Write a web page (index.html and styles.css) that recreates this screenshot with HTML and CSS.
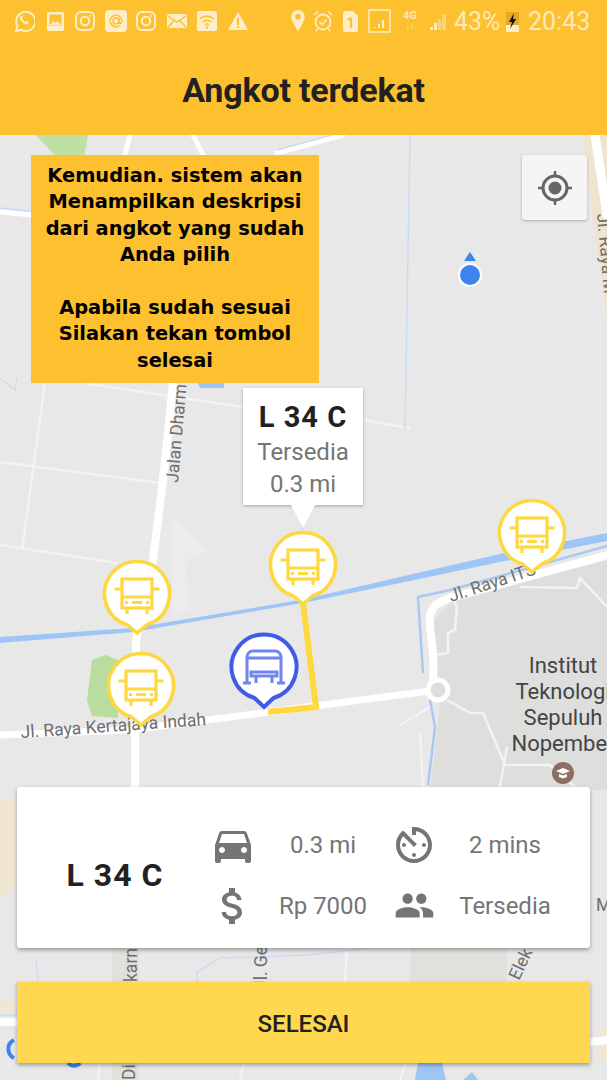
FILE: index.html
```html
<!DOCTYPE html>
<html lang="id">
<head>
<meta charset="UTF-8">
<title>Angkot terdekat</title>
<link rel="stylesheet" href="styles.css">
</head>
<body>
<div class="screen">
  <header class="topbar">
    <div class="status">
      <div class="status-left">
        <svg class="si" viewBox="0 0 22 24"><path d="M3 22l1.400-5A9.600 9.600 0 1 1 8 20.700z" fill="none" stroke="#fdeec8" stroke-width="2"/><path d="M7.500 7c1-1 2-.5 2.300 1l-.6 1.500c.8 1.600 1.800 2.600 3.300 3.300l1.500-.8c1.500.3 2 1.300 1.200 2.400-1.500 1.500-3.500 1-6-1.200C7 10.800 6.200 8.700 7.500 7z" fill="#fdeec8"/></svg>
        <svg class="si" viewBox="0 0 22 24"><rect x="3" y="3" width="17" height="19" rx="1.500" fill="#fdeec8"/><rect x="5.500" y="5.500" width="12" height="11" fill="#fdc02f"/><path d="M6 16l3.500-4 2 2 2-2 3.500 4z" fill="#fdeec8"/></svg>
        <svg class="si" viewBox="0 0 22 24"><rect x="2" y="3" width="18" height="18" rx="5" fill="none" stroke="#fdeec8" stroke-width="2"/><circle cx="11" cy="12" r="4.200" fill="none" stroke="#fdeec8" stroke-width="2"/><circle cx="16" cy="7" r="1" fill="#fdeec8"/></svg>
        <svg class="si" viewBox="0 0 22 24"><rect x="0" y="1" width="22" height="22" rx="4" fill="#fdeec8"/><circle cx="11" cy="12" r="3" fill="none" stroke="#fdc02f" stroke-width="1.500"/><path d="M14 9v4.500c0 1.500 2.800 1.500 2.800-1.500a5.800 5.800 0 1 0-2.300 4.600" fill="none" stroke="#fdc02f" stroke-width="1.500"/></svg>
        <svg class="si" viewBox="0 0 22 24"><rect x="2" y="3" width="18" height="18" rx="5" fill="none" stroke="#fdeec8" stroke-width="2"/><circle cx="11" cy="12" r="4.200" fill="none" stroke="#fdeec8" stroke-width="2"/><circle cx="16" cy="7" r="1" fill="#fdeec8"/></svg>
        <svg class="si" viewBox="0 0 22 24"><rect x="1" y="5" width="20" height="14" rx="2" fill="#fdeec8"/><path d="M2 7l9 6 9-6M2 18l6-6M20 18l-6-6" fill="none" stroke="#fdc02f" stroke-width="1.500"/></svg>
        <svg class="si" viewBox="0 0 22 24"><rect x="1" y="2" width="20" height="20" rx="2" fill="#fdeec8"/><path d="M4 10a10 10 0 0 1 14 0M6.500 13a6.500 6.500 0 0 1 9 0M9 16a3 3 0 0 1 4 0" fill="none" stroke="#fdc02f" stroke-width="1.600"/><circle cx="11" cy="18.500" r="1.200" fill="#fdc02f"/></svg>
        <svg class="si" viewBox="0 0 22 24"><path d="M11 3l10 18H1z" fill="#fdeec8"/><rect x="10" y="9" width="2" height="7" fill="#fdc02f"/><rect x="10" y="17" width="2" height="2" fill="#fdc02f"/></svg>
      </div>
      <div class="status-right">
        <svg class="sr-pin" viewBox="0 0 14 24"><path d="M7 1a6.800 6.800 0 0 0-6.800 6.800C.2 12.500 7 22 7 22s6.800-9.500 6.800-14.200A6.800 6.800 0 0 0 7 1z" fill="#fdeec8"/><circle cx="7" cy="7.800" r="2.800" fill="#fdc02f"/></svg>
        <svg class="sr-alarm" viewBox="0 0 20 24"><circle cx="10" cy="13" r="7.500" fill="none" stroke="#fdeec8" stroke-width="1.800"/><path d="M6.500 13l2.500 2.500 4.500-5M1 6l4-3.500M19 6l-4-3.500M4.500 20l-1.500 2M15.500 20l1.500 2" fill="none" stroke="#fdeec8" stroke-width="1.600"/></svg>
        <svg class="sr-sim" viewBox="0 0 15 24"><path d="M2 2h8l5 5v14a2 2 0 0 1-2 2H2a2 2 0 0 1-2-2V4a2 2 0 0 1 2-2z" fill="#fdeec8"/><text x="7.500" y="19" class="sim-num">1</text></svg>
        <svg class="sr-box" viewBox="0 0 23 24"><rect x="1" y="1" width="21" height="22" fill="none" stroke="#fdeec8" stroke-width="1.500"/><path d="M6 18h2v1H6zM10 15h2v4h-2zM14 11h2v8h-2z" fill="#fdeec8"/></svg>
        <span class="sr-net">4G<br><i>↓↑</i></span>
        <svg class="sr-bars" viewBox="0 0 16 24"><path d="M0 21h3v-3H0zM4 21h3v-7H4z" fill="#fdeec8"/><path d="M8 21h3V10H8zM12 21h4V5h-4z" fill="#fdeec8" opacity=".45"/></svg>
        <span class="sr-pct">43%</span>
        <svg class="sr-batt" viewBox="0 0 13 24"><rect x="0" y="3" width="13" height="20" fill="#fdeec8"/><rect x="0" y="3" width="13" height="13" fill="#e0a92a"/><path d="M8 4L3 13h3l-2 7 6-10H7z" fill="#111"/></svg>
        <span class="sr-time">20:43</span>
      </div>
    </div>
    <h1 class="title">Angkot terdekat</h1>
  </header>

  <main class="map">
    <svg class="map-bg" viewBox="0 135 607 945" width="607" height="945">
      <defs>
        <g id="bus">
          <path d="M-9.500 31A32.500 32.500 0 1 1 9.500 31L0 39z" fill="#fff" stroke="#fdd83f" stroke-width="3.500"/>
          <g fill="none" stroke="#fdd83f" stroke-width="3.200">
            <rect x="-15" y="-15" width="30" height="29"/>
            <path d="M-15 3H15M-22.500-5H-15M15-5H22.500M-10 14V20M10 14V20M-5 8.500H5M-12 8.500H-9M9 8.500H12"/>
          </g>
        </g>
      </defs>

      <rect x="0" y="135" width="607" height="945" fill="#e8e8e8"/>

      <!-- kampus dan area -->
      <path d="M432 622L450 603 607 560V790H430L440 705 432 690z" fill="#dededc"/>
      <path d="M36 135H88L84 157 56 157z" fill="#bfe0a4"/>
      <path d="M92 660L105 655 118 660V718L92 716 87 700z" fill="#b9dd9e"/>
      <path d="M172 520H178L208 552 185 560 190 610 172 613z" fill="#ececec"/>
      <path d="M582 135H607V320z" fill="#efe4cf"/>
      <path d="M0 800H15V890L0 897z" fill="#f1e6d2"/>
      <rect x="112" y="948" width="27" height="132" fill="#e0e0dc"/>
      <rect x="410" y="948" width="97" height="34" fill="#e0e0dc"/>
      <path d="M0 1000H15V1012H0zM597 1030H607V1060H597z" fill="#f1e6d2"/>

      <!-- air -->
      <path d="M0 637L133 628 303 599.500 400 577 500 554 607 533V541L500 562 400 583 303 603 133 632 0 643z" fill="#9dc5f6"/>
      <path d="M198 383H224V388H200zM418 1063H442L446 1080H415zM463 1080L472 1072 478 1080z" fill="#9dc5f6"/>

      <!-- jalan kecil -->
      <g fill="none" stroke="#f3f3f3" stroke-width="2.500">
        <path d="M83 383L243 407M363 420L410 428M0 462L160 483M45 383L22 550M0 545L117 563"/>
        <path d="M450 593L457 607 455 630 448 633 448 653 433 655M520 587L577 588 580 578 607 607"/>
        <path d="M447 700L470 713 483 713 505 765 550 765 575 787M507 747L500 787M400 725L430 707M420 733L423 787"/>
        <path d="M347 948L345 982M244 1063L240 1080M406 1063L400 1080M100 1063L98 1080"/>
      </g>

      <!-- jalan besar -->
      <g fill="none" stroke="#fff" stroke-linecap="round">
        <path d="M0 735L130 730 300 708 437 690" stroke-width="7"/>
        <path d="M173 383L163 480 153 560 136 640 135 790" stroke-width="8"/>
        <path d="M433 680C436 650 428 630 430 616 433 604 438 603 450 598L607 555" stroke-width="8"/>
        <path d="M595 135L607 215" stroke-width="9"/>
        <circle cx="438" cy="690" r="10" stroke-width="5" fill="#dededc"/>
        <path d="M130 135L125 155M193 135L203 155M277 153L343 135" stroke-width="5"/>
        <path d="M0 212L31 215" stroke-width="5"/>
        <path d="M0 1022L17 1022M590 1042L607 1040" stroke-width="8"/>
      </g>

      <!-- garis biru tipis -->
      <g fill="none" stroke="#c9dcf5" stroke-width="1.500">
        <path d="M410 135L405 430M0 208L31 211M277 150L343 132M0 378L15 390 17 378"/>
        <path d="M197 982V972L220 958 310 955 368 948M36 960L38 980M0 1015H17"/>
        <path d="M300 510L303 530"/>
      </g>
      <path d="M423 673L418 597 450 590 607 546M430 700L435 727 428 785" fill="none" stroke="#a9c8f3" stroke-width="2.500"/>

      <!-- rute -->
      <path d="M303 603L316 707 268 712" fill="none" stroke="#fdd83f" stroke-width="6"/>

      <!-- label -->
      <g class="maplabel">
        <text transform="translate(21 738) rotate(-4)">Jl. Raya Kertajaya Indah</text>
        <text transform="translate(178 483) rotate(-85)">Jalan Dharm</text>
        <text transform="translate(451 602) rotate(-18)">Jl. Raya ITS</text>
        <text transform="translate(597 214) rotate(85)">Jl. Raya M</text>
        <text transform="translate(137 982) rotate(-90)">karn</text>
        <text transform="translate(267 990) rotate(-90)">Jl. Ge</text>
        <text transform="translate(519 981) rotate(-65)">Elek</text>
        <text transform="translate(135 1080) rotate(-90)">Di</text>
        <text x="596" y="911">M</text>
      </g>
      <g class="campus">
        <text x="563" y="673">Institut</text>
        <text x="563" y="699">Teknologi</text>
        <text x="563" y="725">Sepuluh</text>
        <text x="563" y="751">Nopember</text>
      </g>
      <circle cx="563" cy="773" r="11" fill="#8d6e63"/>
      <path d="M556 771l7-3 7 3-7 3zM559 774v3l4 1.500 4-1.500v-3l-4 1.500z" fill="#fff"/>

      <!-- lokasi pengguna -->
      <path d="M470 252L464 261H476z" fill="#3f84ee"/>
      <circle cx="470" cy="275" r="11" fill="#3f84ee" stroke="#fff" stroke-width="2"/>

      <!-- marker -->
      <use href="#bus" x="137" y="594"/>
      <use href="#bus" x="141" y="686"/>
      <use href="#bus" x="303" y="565"/>
      <use href="#bus" x="532" y="533"/>
      <g transform="translate(264 667)">
        <path d="M-9.500 31A32.500 32.500 0 1 1 9.500 31L0 40z" fill="#fff" stroke="#3f5be8" stroke-width="4"/>
        <g fill="none" stroke="#6f86ee" stroke-width="3">
          <path d="M-17 16V-10a6 6 0 0 1 6-6H11a6 6 0 0 1 6 6V16M-17-9H17M-21 16H-13M13 16H21M-8 9V16M8 9V16"/>
          <rect x="-13" y="5" width="26" height="4"/>
        </g>
      </g>

      <!-- sisa lingkaran biru di bawah -->
      <path d="M14 1040A10 10 0 0 0 14 1058M68 1063A8 8 0 0 0 80 1063" fill="none" stroke="#3f84ee" stroke-width="4"/>
    </svg>

    <button class="locate">
      <svg viewBox="0 0 36 36" width="36" height="36"><circle cx="18" cy="18" r="12" fill="none" stroke="#666" stroke-width="3"/><circle cx="18" cy="18" r="6.500" fill="#666"/><path d="M18 1V6M18 30V35M1 18H6M30 18H35" stroke="#666" stroke-width="2.500"/></svg>
    </button>

    <div class="note">
      <p>Kemudian. sistem akan<br>Menampilkan deskripsi<br>dari angkot yang sudah<br>Anda pilih</p>
      <p>Apabila sudah sesuai<br>Silakan tekan tombol<br>selesai</p>
    </div>

    <div class="popup">
      <div class="popup-name">L 34 C</div>
      <div class="popup-line">Tersedia</div>
      <div class="popup-line">0.3 mi</div>
    </div>

    <div class="sheet">
      <section class="card">
        <div class="card-name">L 34 C</div>
        <svg class="ic" viewBox="0 0 24 24"><path d="M18.920 6.010C18.720 5.420 18.160 5 17.500 5h-11c-.66 0-1.210.42-1.420 1.010L3 12v8c0 .55.45 1 1 1h1c.55 0 1-.45 1-1v-1h12v1c0 .55.45 1 1 1h1c.55 0 1-.45 1-1v-8l-2.080-5.990zM6.500 16c-.83 0-1.500-.67-1.500-1.500S5.670 13 6.500 13s1.500.67 1.500 1.500S7.330 16 6.500 16zm11 0c-.83 0-1.500-.67-1.500-1.500s.67-1.500 1.500-1.500 1.500.67 1.500 1.500-.67 1.500-1.500 1.500zM5 11l1.500-4.500h11L19 11H5z"/></svg>
        <div class="val">0.3 mi</div>
        <svg class="ic" viewBox="0 0 24 24"><path d="M11 17c0 .55.45 1 1 1s1-.45 1-1-.45-1-1-1-1 .45-1 1zm0-14v4h2V5.080c3.390.49 6 3.390 6 6.920 0 3.870-3.130 7-7 7s-7-3.130-7-7c0-1.680.59-3.220 1.580-4.420L12 13l1.410-1.410-6.800-6.800v.02C4.420 6.450 3 9.050 3 12c0 4.970 4.020 9 9 9 4.970 0 9-4.030 9-9s-4.030-9-9-9h-1zm7 9c0-.55-.45-1-1-1s-1 .45-1 1 .45 1 1 1 1-.45 1-1zM6 12c0 .55.45 1 1 1s1-.45 1-1-.45-1-1-1-1 .45-1 1z"/></svg>
        <div class="val">2 mins</div>
        <svg class="ic" viewBox="0 0 24 24"><path d="M11.800 10.900c-2.270-.59-3-1.200-3-2.150 0-1.090 1.010-1.850 2.700-1.850 1.780 0 2.440.85 2.500 2.100h2.210c-.07-1.720-1.120-3.300-3.210-3.810V3h-3v2.160c-1.940.42-3.500 1.680-3.500 3.610 0 2.310 1.910 3.460 4.700 4.130 2.500.6 3 1.480 3 2.410 0 .69-.49 1.790-2.700 1.790-2.060 0-2.870-.92-2.980-2.100h-2.200c.12 2.190 1.760 3.420 3.680 3.830V21h3v-2.150c1.950-.37 3.500-1.500 3.500-3.550 0-2.840-2.430-3.810-4.700-4.400z"/></svg>
        <div class="val">Rp 7000</div>
        <svg class="ic ic-people" viewBox="0 0 24 24"><path d="M16 11c1.660 0 2.990-1.340 2.990-3S17.660 5 16 5c-1.660 0-3 1.340-3 3s1.340 3 3 3zm-8 0c1.660 0 2.990-1.340 2.990-3S9.660 5 8 5C6.340 5 5 6.340 5 8s1.340 3 3 3zm0 2c-2.330 0-7 1.170-7 3.500V19h14v-2.500c0-2.330-4.670-3.500-7-3.500zm8 0c-.29 0-.62.02-.97.05 1.160.84 1.970 1.970 1.970 3.450V19h6v-2.500c0-2.330-4.670-3.500-7-3.500z"/></svg>
        <div class="val">Tersedia</div>
      </section>
      <button class="done">SELESAI</button>
    </div>
  </main>
</div>
</body>
</html>
```
FILE: styles.css
```css
* {
  box-sizing: border-box;
}
body {
  margin: 0;
  font-family: Roboto, Arial, sans-serif;
  background: #e8e8e8;
}
.screen {
  width: 607px;
  height: 1080px;
  overflow: hidden;
}
.topbar {
  height: 135px;
  background: #fdc02f;
}
.status {
  height: 45px;
  display: flex;
  justify-content: space-between;
  align-items: center;
  padding: 0 16px 3px 13px;
  color: #fde9bb;
}
.status-left {
  display: flex;
  align-items: center;
  gap: 8.500px;
}
.si {
  width: 22px;
  height: 24px;
}
.status-right {
  display: flex;
  align-items: center;
}
.sr-pin { width: 14px; height: 24px; }
.sr-alarm { width: 20px; height: 24px; margin-left: 8px; }
.sr-sim { width: 15px; height: 24px; margin-left: 10px; }
.sr-box { width: 23px; height: 24px; margin-left: 10px; }
.sr-bars { width: 16px; height: 24px; margin-left: 12px; }
.sr-batt { width: 13px; height: 24px; margin-left: 6px; }
.sim-num {
  font-size: 15px;
  font-weight: bold;
  text-anchor: middle;
  fill: #fdc02f;
}
.sr-net {
  width: 16px;
  margin-left: 11px;
  font-size: 11px;
  line-height: 11px;
  font-weight: bold;
  text-align: center;
}
.sr-net i {
  font-style: normal;
  font-size: 9px;
}
.sr-pct {
  width: 46px;
  margin-left: 8px;
  font-size: 25px;
  white-space: nowrap;
}
.sr-time {
  width: 63px;
  margin-left: 9px;
  font-size: 25px;
}
.title {
  margin: 0;
  padding-top: 15px;
  text-align: center;
  font-size: 34px;
  line-height: 60px;
  font-weight: bold;
  letter-spacing: -0.2px;
  color: #212121;
}
.map {
  position: relative;
  height: 945px;
}
.map-bg {
  display: block;
}
.maplabel text {
  font-size: 17.500px;
  fill: #6e6e6e;
}
.campus text {
  font-size: 22px;
  fill: #444;
  text-anchor: middle;
}
.locate {
  position: absolute;
  left: 522px;
  top: 20px;
  width: 65px;
  height: 65px;
  display: flex;
  align-items: center;
  justify-content: center;
  padding: 0;
  border: none;
  border-radius: 3px;
  background: #f5f5f5;
  box-shadow: 0 1px 3px rgba(0,0,0,0.25);
}
.note {
  position: absolute;
  left: 31px;
  top: 20px;
  width: 288px;
  height: 228px;
  padding-top: 8px;
  background: #fdc02f;
  color: #000;
  font-family: "DejaVu Sans", Verdana, sans-serif;
  font-size: 19.400px;
  font-weight: bold;
  line-height: 26.400px;
  text-align: center;
  white-space: nowrap;
}
.note p {
  margin: 0 0 26.400px;
}
.popup {
  position: absolute;
  left: 243px;
  top: 253px;
  width: 120px;
  height: 117px;
  padding-top: 11px;
  background: #fff;
  text-align: center;
  box-shadow: 0 1px 3px rgba(0,0,0,0.3);
}
.popup::after {
  content: "";
  position: absolute;
  left: 48px;
  top: 117px;
  border-left: 12px solid transparent;
  border-right: 12px solid transparent;
  border-top: 23px solid #fff;
}
.popup-name {
  margin-bottom: 1px;
  font-size: 29px;
  line-height: 36px;
  font-weight: bold;
  letter-spacing: 1px;
  color: #212121;
}
.popup-line {
  font-size: 24px;
  line-height: 32px;
  color: #757575;
}
.sheet {
  position: absolute;
  left: 17px;
  right: 17px;
  bottom: 17px;
  display: flex;
  flex-direction: column;
  gap: 34px;
}
.card {
  height: 161px;
  padding-top: 27px;
  display: grid;
  grid-template-columns: 196px 40px 140px 42px 140px;
  grid-template-rows: 61px 61px;
  align-items: center;
  justify-items: center;
  background: #fff;
  border-radius: 3px;
  box-shadow: 0 2px 4px rgba(0,0,0,0.35);
}
.card-name {
  grid-row: 1 / 3;
  font-size: 32px;
  font-weight: bold;
  letter-spacing: 1px;
  color: #212121;
}
.ic {
  width: 48px;
  height: 48px;
  fill: #757575;
  margin: 0 -4px;
}
.ic-people {
  width: 41px;
  height: 41px;
  margin: 0;
}
.val {
  font-size: 24px;
  color: #757575;
}
.done {
  height: 81px;
  padding-top: 4px;
  border: none;
  background: #ffd84f;
  color: #212121;
  font-family: Roboto, Arial, sans-serif;
  font-size: 24px;
  font-weight: 500;
  box-shadow: 0 2px 4px rgba(0,0,0,0.35);
}
```
